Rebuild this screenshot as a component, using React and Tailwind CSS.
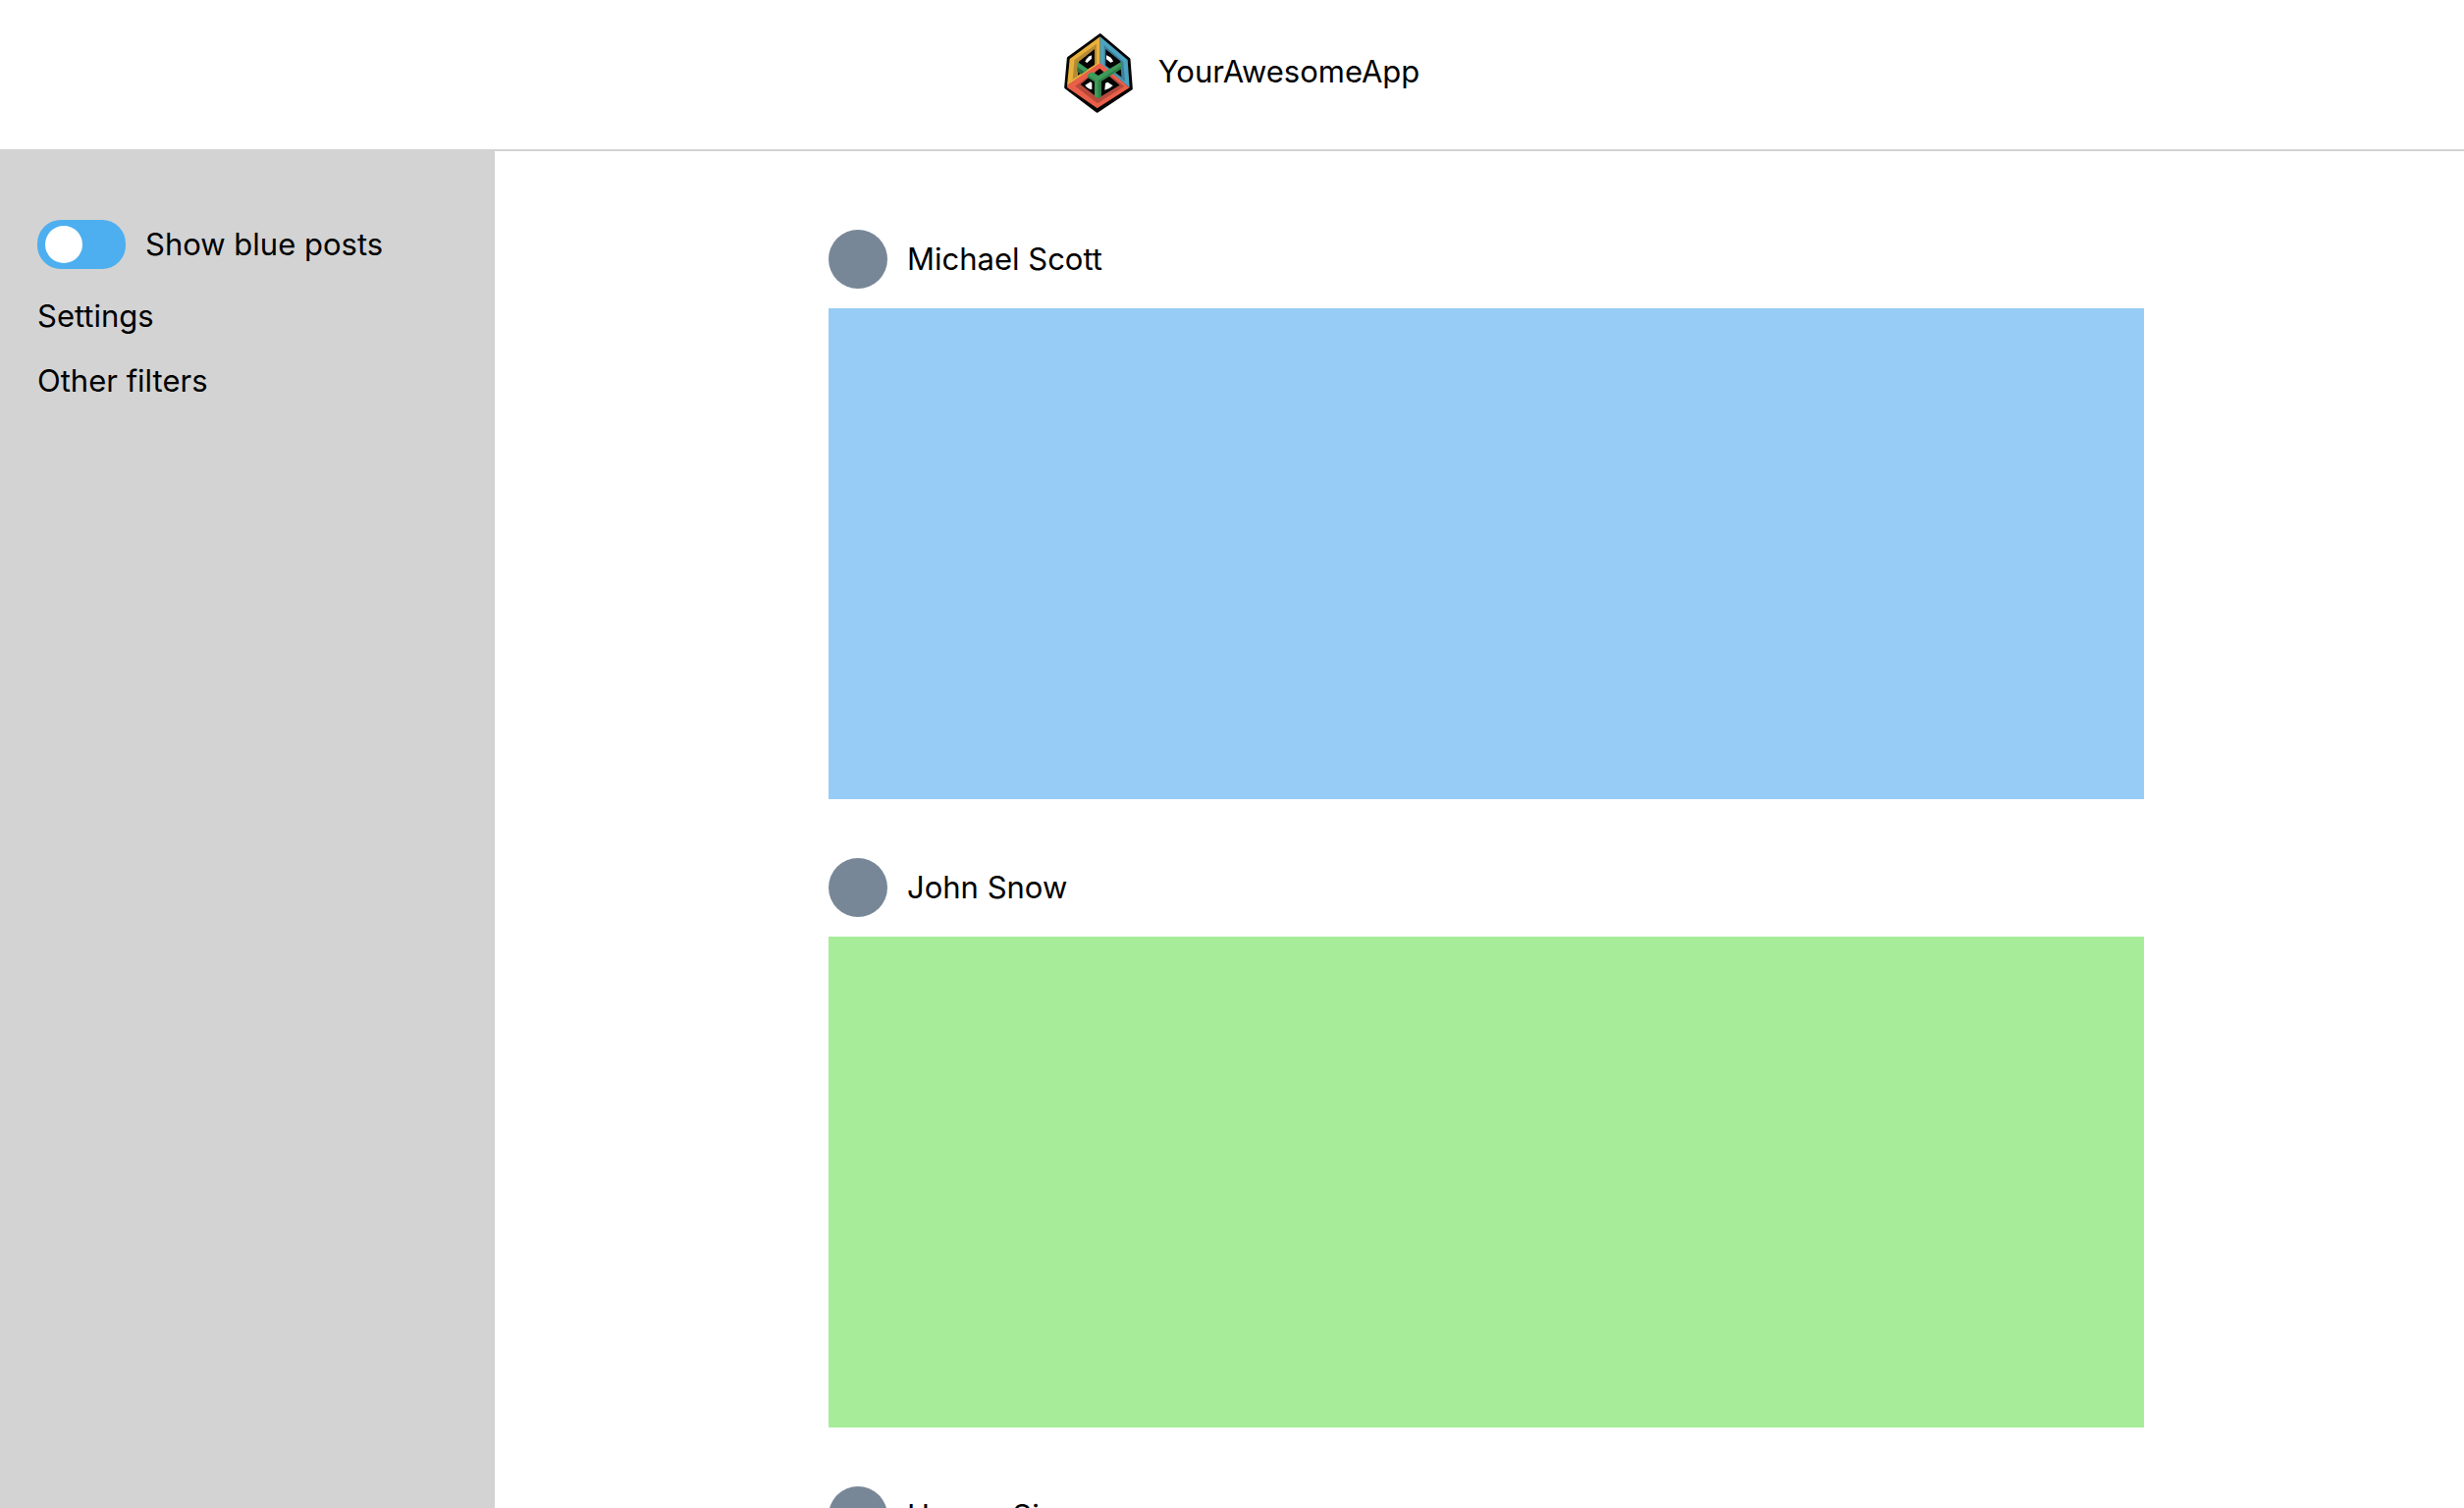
import { useState } from "react";

const posts = [
  { author: "Michael Scott", color: "blue" },
  { author: "John Snow", color: "green" },
  { author: "Homer Simpson", color: "blue" },
];

function Logo() {
  return (
    <svg viewBox="-14 3 300 330" className="h-[110px] w-[100px] shrink-0" role="img" aria-label="Logo">
      <path d="M156 47 244 121 251 211 147 280 51 207 59 118Z" fill="#050505" stroke="#050505" strokeWidth="9" strokeLinejoin="round" />
      {/* yellow frame */}
      <path d="M156 52 V134 L55 202 63 120Z" fill="#e8b13c" />
      <path d="M145 74 V134 L72 183 77 124Z" fill="#b78b34" />
      <path d="M139 90 V138 L88 170 91 128Z" fill="#050505" />
      {/* blue frame */}
      <path d="M156 52 L240 123 246 208 156 134Z" fill="#4ba3c0" />
      <path d="M168 78 L227 128 232 190 168 138Z" fill="#3d7f99" />
      <path d="M173 90 L218 127 221 175 173 140Z" fill="#050505" />
      {/* red frame */}
      <path d="M156 133 L246 208 147 271 55 207 V202Z" fill="#ea5f49" />
      <path d="M156 145 L230 204 148 256 80 203Z" fill="#b64a3c" />
      <path d="M155 149 L216 200 150 240 96 198Z" fill="#050505" />
      {/* window openings */}
      <path d="M110 128 Q116 114 130 109 V119 L116 132Z" fill="#fff" />
      <path d="M175 109 Q190 113 196 128 L188 131 175 121Z" fill="#fff" />
      <path d="M110 200 L127 190 131 194 V213 Q117 212 110 200Z" fill="#fff" />
      <path d="M172 194 L179 191 195 202 Q184 213 170 215Z" fill="#fff" />
      {/* green corner piece, passing behind yellow and over red */}
      <path d="M87 129 L120 152 108 161 86 146Z" fill="#3f9b5b" />
      <path d="M86 145 L108 160 98 167 86 159Z" fill="#2c6c43" />
      <path d="M55 204 V201 L156 133 187 158 172 168 155 150 95 191 62 212Z" fill="#ea5f49" />
      <path d="M119 166 L134 160 150 171 219 130 221 150 159 188 V236 L150 241 139 234 V189 L119 177Z" fill="#3f9b5b" />
      <path d="M150 185 L159 181 V236 L150 241Z M119 170 L142 187 139 190 119 177Z M219 142 L221 150 159 188 V181Z" fill="#2f8049" />
      <path d="M142 159 L155 150 167 160 150 169Z" fill="#050505" />
    </svg>
  );
}

function Post({ author, color }) {
  return (
    <article>
      <header className="flex items-center gap-5">
        <span className="size-[60px] shrink-0 rounded-full bg-[#788797]" />
        <h2>{author}</h2>
      </header>
      <div className={`mt-5 h-[500px] ${color === "blue" ? "bg-[#96ccf6]" : "bg-[#a6ec99]"}`} />
    </article>
  );
}

export default function App() {
  const [on, setOn] = useState(false);

  return (
    <div className="flex h-screen flex-col overflow-hidden bg-white font-[Inter,sans-serif] text-[31px] leading-9 text-black">
      <header className="flex h-[154px] shrink-0 items-center justify-center gap-4 border-b-2 border-[#d3d3d3]">
        <Logo />
        <h1 className="pb-1.5">YourAwesomeApp</h1>
      </header>
      <div className="flex min-h-0 flex-1">
        <nav className="flex w-[504px] shrink-0 flex-col items-start gap-[30px] bg-[#d3d3d3] px-[38px] pt-[70px]">
          <label className="flex cursor-pointer items-center gap-5">
            <input type="checkbox" role="switch" className="peer sr-only" checked={on} onChange={() => setOn(!on)} />
            <span className="flex h-[50px] w-[90px] items-center rounded-[24px] bg-[#4dafef] px-2 peer-checked:justify-end">
              <span className="size-[38px] rounded-full bg-white" />
            </span>
            Show blue posts
          </label>
          <a href="#settings">Settings</a>
          <a href="#filters">Other filters</a>
        </nav>
        <main className="flex flex-1 flex-col gap-[60px] overflow-hidden pt-20 pr-[326px] pl-[340px]">
          {posts.map((post) => (
            <Post key={post.author} {...post} />
          ))}
        </main>
      </div>
    </div>
  );
}
